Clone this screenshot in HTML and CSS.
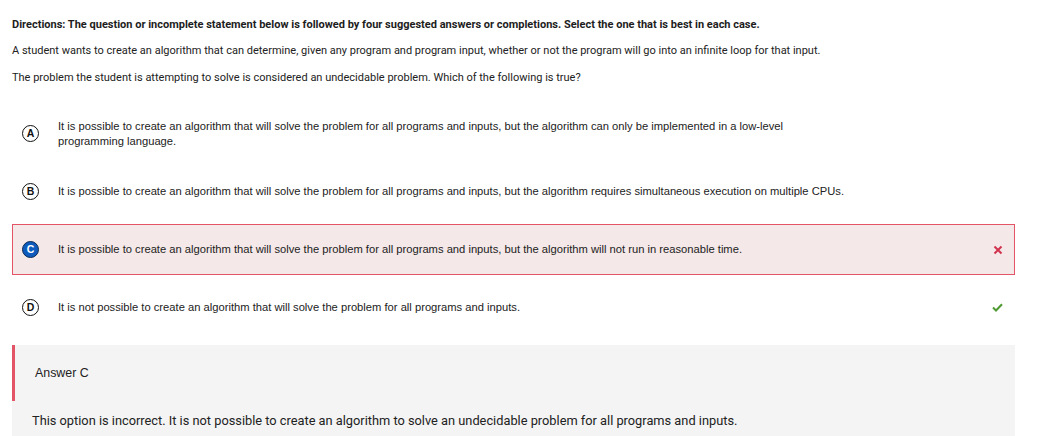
FILE: index.html
```html
<!DOCTYPE html>
<html>
<head>
<meta charset="utf-8">
<link rel="stylesheet" href="styles.css">
</head>
<body>
<div class="page">
  <p class="directions">Directions: The question or incomplete statement below is followed by four suggested answers or completions. Select the one that is best in each case.</p>
  <p class="stem">A student wants to create an algorithm that can determine, given any program and program input, whether or not the program will go into an infinite loop for that input.</p>
  <p class="stem">The problem the student is attempting to solve is considered an undecidable problem. Which of the following is true?</p>

  <div class="options">
    <div class="option">
      <span class="badge">A</span>
      <span class="otext">It is possible to create an algorithm that will solve the problem for all programs and inputs, but the algorithm can only be implemented in a low-level<br>programming language.</span>
    </div>
    <div class="option">
      <span class="badge">B</span>
      <span class="otext">It is possible to create an algorithm that will solve the problem for all programs and inputs, but the algorithm requires simultaneous execution on multiple CPUs.</span>
    </div>
    <div class="option selected">
      <span class="badge badge-sel">C</span>
      <span class="otext">It is possible to create an algorithm that will solve the problem for all programs and inputs, but the algorithm will not run in reasonable time.</span>
      <svg class="mark" width="10" height="10" viewBox="0 0 10 10"><path d="M1.5 1.5 L8.5 8.5 M8.5 1.5 L1.5 8.5" stroke="#d2334f" stroke-width="2" stroke-linecap="butt"/></svg>
    </div>
    <div class="option">
      <span class="badge">D</span>
      <span class="otext">It is not possible to create an algorithm that will solve the problem for all programs and inputs.</span>
      <svg class="mark" width="11" height="9" viewBox="0 0 11 9"><path d="M1 4.5 L4 7.5 L10 1.2" fill="none" stroke="#4f9a33" stroke-width="2"/></svg>
    </div>
  </div>

  <div class="feedback">
    <div class="fb-head">Answer C</div>
    <div class="fb-body">This option is incorrect. It is not possible to create an algorithm to solve an undecidable problem for all programs and inputs.</div>
  </div>
</div>
</body>
</html>
```

FILE: styles.css
```css
* { box-sizing: border-box; }
html, body { margin: 0; padding: 0; background: #fff; }
body { font-family: Roboto, "Liberation Sans", Arial, sans-serif; color: #222; }
.page { padding: 17px 24px 0 12px; }
.directions {
  margin: 0;
  font-size: 11px;
  font-weight: 700;
  line-height: 16px;
  color: #1d1d1d;
}
.stem {
  margin: 10px 0 0;
  font-size: 11px;
  line-height: 16px;
  color: #222;
}
.stem + .stem { margin-top: 11px; }
.options { margin-top: 22px; display: flex; flex-direction: column; gap: 7px; }
.option {
  display: flex;
  align-items: center;
  height: 51px;
  padding: 0 0 0 9px;
  border: 1px solid transparent;
  font-family: "Liberation Sans", Arial, sans-serif;
  font-size: 11.2px;
  line-height: 15px;
  color: #222;
}
.option.selected { background: #f4e8e8; border-color: #e35467; }
.badge {
  flex: none;
  width: 17px;
  height: 17px;
  border-radius: 50%;
  border: 1.5px solid #111;
  background: #fff;
  display: flex;
  align-items: center;
  justify-content: center;
  font-weight: 700;
  font-size: 10.5px;
  line-height: 1;
  color: #111;
  margin-right: 19px;
}
.badge-sel {
  background: #0e5bbd;
  border-color: #0a2a55;
  color: #fff;
}
.otext { flex: 1; }
.mark { flex: none; margin-right: 11px; }
.feedback {
  margin-top: 12px;
  background: #f4f4f4;
  padding-bottom: 12px;
}
.fb-head {
  height: 56px;
  border-left: 3px solid #e35467;
  display: flex;
  align-items: center;
  padding-left: 20px;
  font-family: "Liberation Sans", Arial, sans-serif;
  font-size: 12.4px;
  color: #222;
}
.fb-body {
  padding: 12px 0 0 20px;
  font-size: 12.8px;
  line-height: 16px;
  color: #222;
}
```
